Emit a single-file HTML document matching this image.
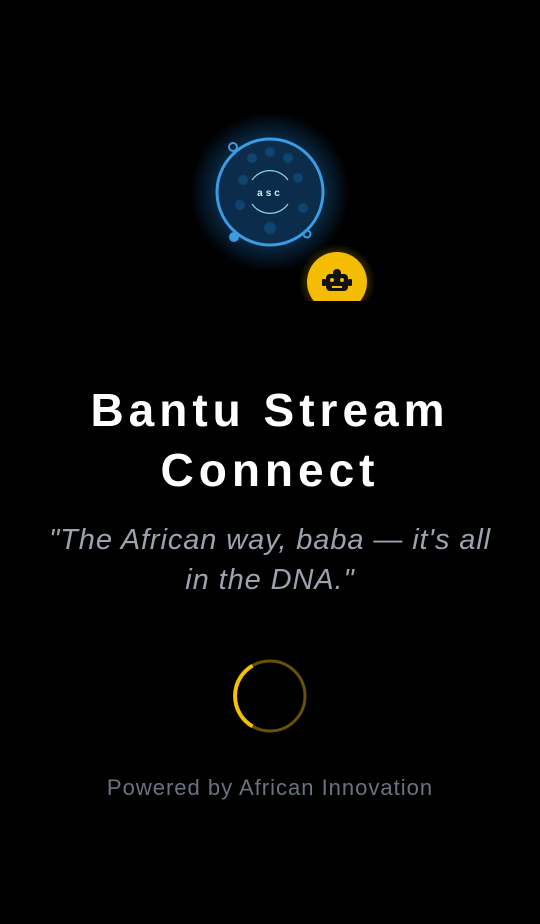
<!DOCTYPE html>
<html><head><style>
body{margin:0;background:#000;width:540px;height:924px;overflow:hidden;position:relative;font-family:"Liberation Sans",sans-serif}
.t{position:absolute;left:0;width:540px;text-align:center}
</style></head><body>
<svg width="540" height="320" style="position:absolute;left:0;top:0">
<defs>
<radialGradient id="g" cx="50%" cy="50%" r="50%"><stop offset="0.55" stop-color="#1a78c8" stop-opacity="0.45"/><stop offset="1" stop-color="#1a78c8" stop-opacity="0"/></radialGradient>
<radialGradient id="y" cx="50%" cy="50%" r="50%"><stop offset="0.6" stop-color="#f0b800" stop-opacity="0.35"/><stop offset="1" stop-color="#f0b800" stop-opacity="0"/></radialGradient>
<clipPath id="c"><rect x="0" y="0" width="540" height="301"/></clipPath>
</defs>
<circle cx="270" cy="192" r="80" fill="url(#g)"/>
<circle cx="270" cy="192" r="53" fill="#0b2c4a" stroke="#3b9be3" stroke-width="3"/>
<g fill="#0f4a78" opacity="0.8">
<circle cx="252" cy="158" r="5"/><circle cx="288" cy="158" r="5"/><circle cx="243" cy="180" r="5"/><circle cx="298" cy="178" r="5"/><circle cx="240" cy="205" r="5"/><circle cx="303" cy="208" r="5"/><circle cx="270" cy="228" r="6"/><circle cx="270" cy="152" r="5"/>
</g>
<path d="M252 180 A22 22 0 0 1 288 180 M252 204 A22 22 0 0 0 288 204" fill="none" stroke="#8ad6ea" stroke-width="1.2"/>
<text x="270" y="196" fill="#cfeff7" font-size="10" font-weight="bold" text-anchor="middle" letter-spacing="3">asc</text>
<circle cx="233" cy="147" r="4" fill="none" stroke="#3b9be3" stroke-width="2"/>
<circle cx="234" cy="237" r="5" fill="#3b9be3"/>
<circle cx="307" cy="234" r="3.5" fill="none" stroke="#3b9be3" stroke-width="2"/>
<g clip-path="url(#c)">
<circle cx="337" cy="282" r="38" fill="url(#y)"/>
<circle cx="337" cy="282" r="30" fill="#f5bd02"/>
<g fill="#111">
<circle cx="337" cy="273" r="4"/>
<rect x="326" y="274" width="22" height="17" rx="4"/>
<rect x="322" y="279" width="4" height="7" rx="1"/><rect x="348" y="279" width="4" height="7" rx="1"/>
</g>
<circle cx="332" cy="280" r="2" fill="#f5bd02"/><circle cx="342" cy="280" r="2" fill="#f5bd02"/>
<rect x="332" y="286" width="10" height="2" fill="#f5bd02"/>
</g>
</svg>
<div class="t" style="top:380px;color:#fff;font-size:46px;font-weight:bold;line-height:60px;letter-spacing:5px">Bantu Stream<br>Connect</div>
<div class="t" style="top:520px;color:#9ca3af;font-size:29px;font-style:italic;line-height:40px;white-space:nowrap;letter-spacing:0.9px">"The African way, baba — it's all<br>in the DNA."</div>
<svg width="80" height="80" style="position:absolute;left:230px;top:656px">
<circle cx="40" cy="40" r="35" fill="none" stroke="#6b5200" stroke-width="3"/>
<path d="M22.5 9.7 A35 35 0 0 0 22.5 70.3" fill="none" stroke="#f5c000" stroke-width="4"/>
</svg>
<div class="t" style="top:775px;color:#6b7280;font-size:22px;letter-spacing:1px">Powered by African Innovation</div>
</body></html>
